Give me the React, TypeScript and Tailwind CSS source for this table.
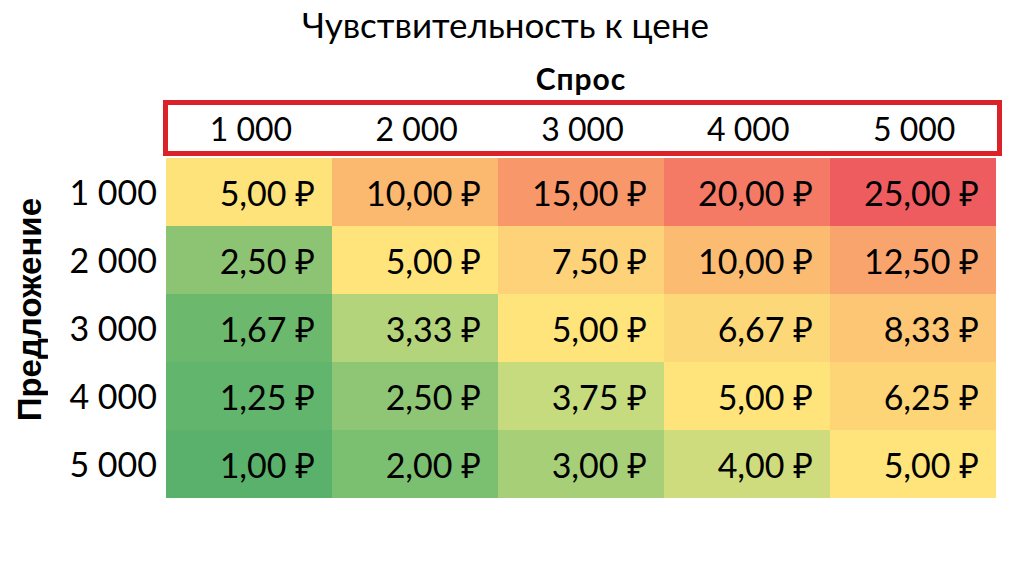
const demand = ["1 000", "2 000", "3 000", "4 000", "5 000"];

const rows = [
  {
    label: "1 000",
    cells: [
      { value: "5,00 ₽", bg: "bg-[#fee27a]" },
      { value: "10,00 ₽", bg: "bg-[#fbb86f]" },
      { value: "15,00 ₽", bg: "bg-[#f89769]" },
      { value: "20,00 ₽", bg: "bg-[#f47a66]" },
      { value: "25,00 ₽", bg: "bg-[#ef5c60]" },
    ],
  },
  {
    label: "2 000",
    cells: [
      { value: "2,50 ₽", bg: "bg-[#8cc474]" },
      { value: "5,00 ₽", bg: "bg-[#fee47b]" },
      { value: "7,50 ₽", bg: "bg-[#fdd278]" },
      { value: "10,00 ₽", bg: "bg-[#fbbc72]" },
      { value: "12,50 ₽", bg: "bg-[#f9a46c]" },
    ],
  },
  {
    label: "3 000",
    cells: [
      { value: "1,67 ₽", bg: "bg-[#6cb96e]" },
      { value: "3,33 ₽", bg: "bg-[#b3d47b]" },
      { value: "5,00 ₽", bg: "bg-[#fee47b]" },
      { value: "6,67 ₽", bg: "bg-[#fdd878]" },
      { value: "8,33 ₽", bg: "bg-[#fcc674]" },
    ],
  },
  {
    label: "4 000",
    cells: [
      { value: "1,25 ₽", bg: "bg-[#62b56c]" },
      { value: "2,50 ₽", bg: "bg-[#8ec676]" },
      { value: "3,75 ₽", bg: "bg-[#c6da7e]" },
      { value: "5,00 ₽", bg: "bg-[#fee47b]" },
      { value: "6,25 ₽", bg: "bg-[#fdd577]" },
    ],
  },
  {
    label: "5 000",
    cells: [
      { value: "1,00 ₽", bg: "bg-[#59b16b]" },
      { value: "2,00 ₽", bg: "bg-[#7bbf71]" },
      { value: "3,00 ₽", bg: "bg-[#a6cf78]" },
      { value: "4,00 ₽", bg: "bg-[#cedc7e]" },
      { value: "5,00 ₽", bg: "bg-[#fee47b]" },
    ],
  },
];

export default function App() {
  return (
    <div className="w-[1011px] h-[564px] bg-white text-black font-['Lato','Noto_Sans',sans-serif] overflow-hidden">
      {/* Title */}
      <h1 className="mt-[7px] text-center text-[35px] leading-none">
        Чувствительность к цене
      </h1>

      <div className="grid grid-cols-[66px_100px_830px]">
        {/* Column axis */}
        <div className="col-start-3 mt-[21px] text-center text-[30px] font-bold leading-none tracking-[1px]">
          Спрос
        </div>
        <div className="col-start-3 mt-[7px] -ml-[3px] w-[839px] h-[56px] border-[5px] border-[#dc2229] grid grid-cols-5 items-center pt-[2px]">
          {demand.map((d) => (
            <span key={d} className="text-center text-[32px] leading-none">
              {d}
            </span>
          ))}
        </div>

        {/* Row axis */}
        <div className="col-start-1 flex items-center justify-center pb-[34px] pr-[7px]">
          <span className="[writing-mode:vertical-rl] rotate-180 font-['Liberation_Sans',sans-serif] font-bold text-[33px] leading-none">
            Предложение
          </span>
        </div>
        <div className="col-start-2 mt-[2px] flex flex-col">
          {rows.map((r) => (
            <div
              key={r.label}
              className="h-[68px] flex items-center justify-end pr-[9px] text-[34px] leading-none"
            >
              {r.label}
            </div>
          ))}
        </div>

        {/* Heat map */}
        <div className="col-start-3 mt-[2px] grid grid-cols-5">
          {rows.flatMap((r) =>
            r.cells.map((c, i) => (
              <div
                key={r.label + i}
                className={`${c.bg} h-[68px] flex items-center justify-end pr-[17px] pt-[1px] text-[34px] leading-none`}
              >
                {c.value}
              </div>
            ))
          )}
        </div>
      </div>
    </div>
  );
}
